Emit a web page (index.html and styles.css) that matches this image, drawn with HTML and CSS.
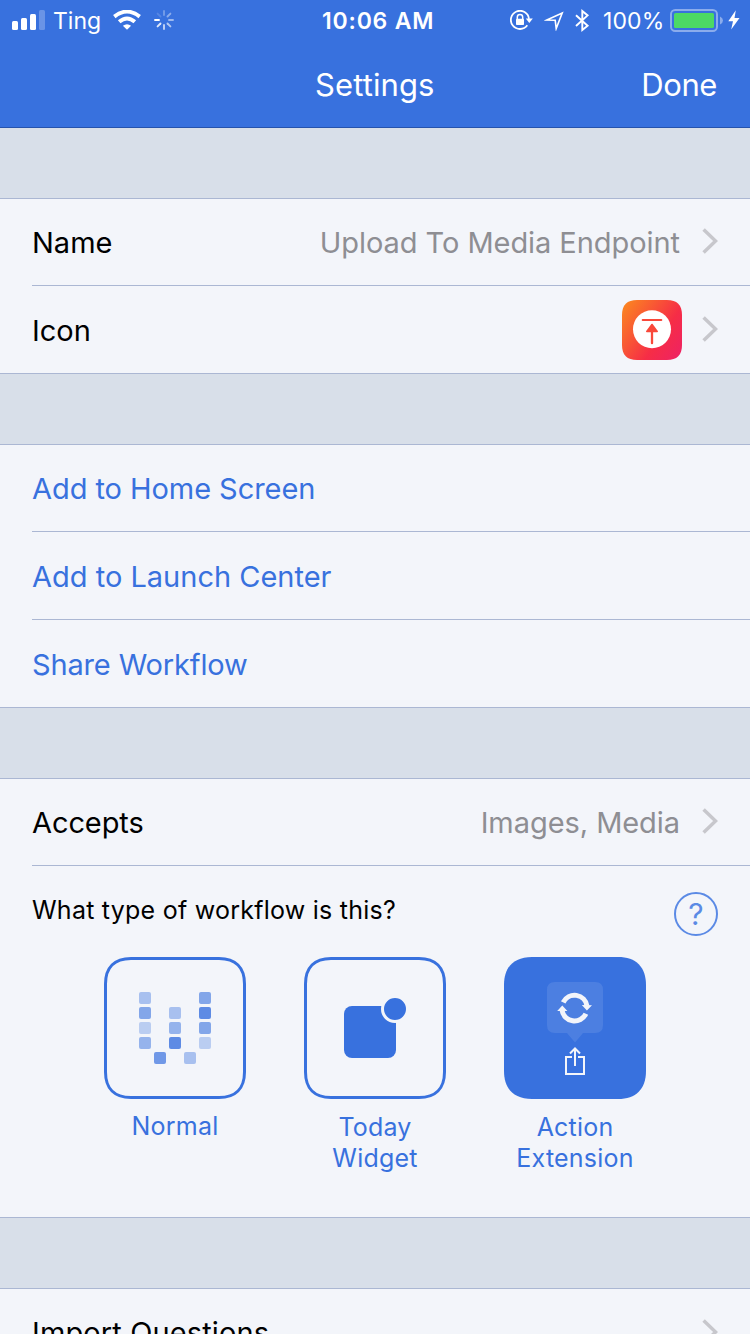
FILE: index.html
```html
<!DOCTYPE html>
<html lang="en">
<head>
<meta charset="utf-8">
<title>Settings</title>
<link rel="stylesheet" href="styles.css">
</head>
<body>
<svg class="defs" width="0" height="0" aria-hidden="true">
  <symbol id="chevron" viewBox="0 0 16 26"><path d="M1.6 1.4 L13.6 13 L1.6 24.6" fill="none" stroke="#c7c7cc" stroke-width="3.5"/></symbol>
</svg>
<header class="header">
  <div class="status">
    <div class="status-left">
      <svg class="signal" width="33" height="20" viewBox="0 0 33 20" fill="#fff"><rect y="11" width="6" height="9" rx="1.5"/><rect x="9" y="8" width="6" height="12" rx="1.5"/><rect x="18" y="4" width="6" height="16" rx="1.5"/><rect x="27" width="6" height="20" rx="1.5" opacity=".25"/></svg>
      <span class="carrier">Ting</span>
      <svg class="wifi" width="28" height="20" viewBox="0 0 28 20"><path d="M14 19.8 L9.9 15.7 Q14 12.6 18.1 15.7Z" fill="#fff"/><path d="M6.2 11.8 Q14 5.2 21.8 11.8" fill="none" stroke="#fff" stroke-width="4"/><path d="M1.3 6.6 Q14 -3.4 26.7 6.6" fill="none" stroke="#fff" stroke-width="3.9"/></svg>
      <svg class="spinner" width="20" height="20" viewBox="-10 -10 20 20" stroke="#fff" stroke-width="1.9" stroke-linecap="round"><path d="M-9 0H-5"/><path d="M-6.4 6.4L-3.5 3.5" opacity=".85"/><path d="M0 9V5" opacity=".7"/><path d="M6.4 6.4L3.5 3.5" opacity=".62"/><path d="M9 0H5" opacity=".5"/><path d="M6.4 -6.4L3.5 -3.5" opacity=".42"/><path d="M0 -9V-5" opacity=".3"/><path d="M-6.4 -6.4L-3.5 -3.5" opacity=".15"/></svg>
    </div>
    <span class="time">10:06 AM</span>
    <div class="status-right">
      <svg class="lock" width="23" height="20" viewBox="0 0 23 20" fill="none" stroke="#fff"><path d="M17.300 15.300A9.100 9.100 0 1 1 19 8.800" stroke-width="1.800"/><path d="M15.800 8.500H22.800L19.300 13Z" fill="#fff" stroke="none"/><path d="M7.300 9V7.200a2.700 2.700 0 0 1 5.400 0V9" stroke-width="1.500"/><rect x="6" y="8.700" width="8" height="6.300" rx=".8" fill="#fff" stroke="none"/></svg>
      <svg class="location" width="20" height="20" viewBox="0 0 20 20"><path d="M2.800 9L18.200 2L12.200 17.500L11.200 9.200Z" fill="none" stroke="#fff" stroke-width="1.600" stroke-miterlimit="10"/></svg>
      <svg class="bluetooth" width="15" height="23" viewBox="0 0 15 23"><path d="M1 6.200L12.600 16.800L7.300 21V2L12.600 6.400L1 17" fill="none" stroke="#fff" stroke-width="1.900"/></svg>
      <span class="percent">100%</span>
      <svg class="battery" width="54" height="24" viewBox="0 0 54 24"><rect x="1" y="1" width="46" height="21" rx="4.2" fill="none" stroke="#fff" stroke-opacity=".42" stroke-width="2"/><rect x="4" y="4" width="40" height="15" rx="1.6" fill="#4cd964"/><path d="M50 7.5 Q53 8.8 53 11.5 T50 15.5Z" fill="#fff" opacity=".42"/></svg>
      <svg class="bolt" width="12" height="20" viewBox="0 0 12 20"><path d="M7.8 .2 L.3 11.2 H5 L3.2 19.6 L11.5 7.9 H6.5Z" fill="#fff"/></svg>
    </div>
  </div>
  <nav class="nav"><h1 class="title">Settings</h1><a class="done">Done</a></nav>
</header>
<main>
  <section class="group">
    <div class="row"><span class="label name">Name</span><span class="value endpoint">Upload To Media Endpoint</span><svg class="chevron"><use href="#chevron"/></svg></div>
    <div class="row"><span class="label icon-label">Icon</span>
      <svg class="app-icon" width="60" height="60" viewBox="0 0 60 60"><defs><linearGradient id="warm" x1="0" y1=".15" x2="1" y2=".85"><stop offset="0" stop-color="#fb8222"/><stop offset=".65" stop-color="#f62d46"/><stop offset="1" stop-color="#ef2360"/></linearGradient></defs><path d="M0 15C0 5 5 0 15 0H45C55 0 60 5 60 15V45C60 55 55 60 45 60H15C5 60 0 55 0 45Z" fill="url(#warm)"/><circle cx="30" cy="29.300" r="19" fill="#fff"/><path d="M20.700 20H39.300" stroke="#f9483a" stroke-width="2" stroke-linecap="round"/><path d="M30 43.200V29" stroke="#f9483a" stroke-width="2.300" stroke-linecap="round"/><path d="M30 24.500L35.200 31.400H24.800Z" fill="#f9483a" stroke="#f9483a" stroke-width="1.600" stroke-linejoin="round"/></svg>
      <svg class="chevron"><use href="#chevron"/></svg></div>
  </section>
  <section class="group">
    <div class="row"><a class="link home">Add to Home Screen</a></div>
    <div class="row"><a class="link launch">Add to Launch Center</a></div>
    <div class="row"><a class="link share">Share Workflow</a></div>
  </section>
  <section class="group">
    <div class="row"><span class="label accepts">Accepts</span><span class="value media">Images, Media</span><svg class="chevron"><use href="#chevron"/></svg></div>
    <div class="types">
      <div class="types-head"><span class="question">What type of workflow is this?</span><span class="help">?</span></div>
      <div class="tiles">
        <div class="tile">
          <svg width="142" height="142" viewBox="0 0 142 142"><path d="M1.500 27C1.500 10.500 10.500 1.500 27 1.500H115C131.500 1.500 140.500 10.500 140.500 27V115C140.500 131.500 131.500 140.500 115 140.500H27C10.500 140.500 1.500 131.500 1.500 115Z" fill="none" stroke="#3871de" stroke-width="3"/>
          <g fill="#3871de"><rect x="35" y="35" width="12" height="12" rx="2" opacity=".4"/><rect x="35" y="50" width="12" height="12" rx="2" opacity=".6"/><rect x="35" y="65" width="12" height="12" rx="2" opacity=".3"/><rect x="35" y="80" width="12" height="12" rx="2" opacity=".5"/><rect x="50" y="95" width="12" height="12" rx="2" opacity=".7"/><rect x="65" y="50" width="12" height="12" rx="2" opacity=".4"/><rect x="65" y="65" width="12" height="12" rx="2" opacity=".5"/><rect x="65" y="80" width="12" height="12" rx="2" opacity=".8"/><rect x="80" y="95" width="12" height="12" rx="2" opacity=".4"/><rect x="95" y="35" width="12" height="12" rx="2" opacity=".6"/><rect x="95" y="50" width="12" height="12" rx="2" opacity=".8"/><rect x="95" y="65" width="12" height="12" rx="2" opacity=".6"/><rect x="95" y="80" width="12" height="12" rx="2" opacity=".3"/></g></svg>
          <span class="caption normal">Normal</span>
        </div>
        <div class="tile">
          <svg width="142" height="142" viewBox="0 0 142 142"><path d="M1.500 27C1.500 10.500 10.500 1.500 27 1.500H115C131.500 1.500 140.500 10.500 140.500 27V115C140.500 131.500 131.500 140.500 115 140.500H27C10.500 140.500 1.500 131.500 1.500 115Z" fill="none" stroke="#3871de" stroke-width="3"/><rect x="40" y="49" width="52" height="52" rx="8" fill="#3871de"/><circle cx="91" cy="52" r="12.500" fill="#3871de" stroke="#f3f5fa" stroke-width="3"/></svg>
          <span class="caption today">Today<br>Widget</span>
        </div>
        <div class="tile">
          <svg width="142" height="142" viewBox="0 0 142 142"><path d="M0 28C0 10 10 0 28 0H114C132 0 142 10 142 28V114C142 132 132 142 114 142H28C10 142 0 132 0 114Z" fill="#3871de"/><path d="M51 25H91Q99 25 99 33V68Q99 76 91 76H79L71 85.500L63 76H51Q43 76 43 68V33Q43 25 51 25Z" fill="#fff" opacity=".1"/>
          <g fill="none" stroke="#f3f5fa" stroke-width="5"><path d="M59.200 45.300A12.600 12.600 0 0 1 83 49"/><path d="M81.900 56.700A12.600 12.600 0 0 1 58 53"/></g><path d="M77.800 48L88 48.300L82.900 53.500ZM53.200 54L58.300 48.500L63.400 54Z" fill="#f3f5fa"/>
          <path d="M68 100H62V117H80V100H74M71 109V92.500M66 96.500L71 91.500L76 96.500" fill="none" stroke="#f3f5fa" stroke-width="2"/></svg>
          <span class="caption action">Action<br>Extension</span>
        </div>
      </div>
    </div>
  </section>
  <section class="group">
    <div class="row"><span class="label import">Import Questions</span><svg class="chevron"><use href="#chevron"/></svg></div>
  </section>
</main>
</body>
</html>
```
FILE: styles.css
```css
* { box-sizing: border-box; }
html, body { margin: 0; height: 1334px; overflow: hidden; }
body { width: 750px; background: #d8dfe9; font-family: Inter, "Liberation Sans", sans-serif; color: #000; }
svg { display: block; flex: none; }
.defs { position: absolute; }

.header { height: 128px; background: #3871de; color: #fff; border-bottom: 1px solid #2653ac; }
.status { height: 40px; display: grid; grid-template: 40px / 322px 1fr 240px; font-size: 23px; line-height: 38px; white-space: nowrap; }
.status-left, .status-right { display: flex; align-items: center; }
.status-left { padding-left: 12px; }
.carrier { width: 47px; margin-left: 8px; padding-top: 2px; }
.wifi { margin-left: 13px; }
.spinner { margin-left: 13px; }
.time { padding-top: 2px; font-weight: 600; letter-spacing: .8px; }
.location { margin-left: 11px; margin-top: 2px; }
.bluetooth { margin-left: 11px; }
.percent { width: 61px; margin-left: 13px; padding-top: 2px; letter-spacing: .1px; }
.battery { margin-left: 6px; margin-top: 1px; }
.bolt { margin-left: 4px; }
.nav { height: 87px; display: grid; grid-template-columns: 1fr 120px 1fr; align-items: center; padding: 1px 33px 0; font-size: 31px; }
.title { grid-column: 2; margin: 0; font-size: 31px; font-weight: 400; letter-spacing: .1px; white-space: nowrap; }
.done { justify-self: end; letter-spacing: -.4px; }

.group { margin-top: 70px; background: #f3f5fa; border: solid #abb7d3; border-width: 1px 0; }
.row { height: 88px; margin-left: 32px; padding-right: 32px; display: flex; align-items: center; border-bottom: 1px solid #abb7d3; font-size: 29px; white-space: nowrap; }
.row:first-child { height: 87px; }
.row:last-child { height: 87px; border-bottom: 0; }
.row:not(:first-child) .label, .row:not(:first-child) .link { padding-top: 2px; }
.label { margin-right: auto; }
.value { color: #8e8e93; letter-spacing: -.06px; }
.chevron { width: 16px; height: 26px; margin: 0 0 2px 22px; }
.app-icon + .chevron { margin: 0 0 1px 20px; }
.link, .caption { color: #3871de; }
.home { letter-spacing: -.06px; }
.share { letter-spacing: -.15px; }
.accepts { letter-spacing: -.1px; }
.import { letter-spacing: .12px; }

.types { height: 351px; padding: 26px 32px 0; }
.types-head { display: flex; justify-content: space-between; height: 65px; font-size: 25px; }
.question { line-height: 37px; letter-spacing: .24px; }
.help { width: 44px; height: 44px; border: 2px solid #5b8ae5; border-radius: 50%; color: #5b8ae5; font-size: 30px; line-height: 40px; text-align: center; }
.tiles { display: grid; grid-template-columns: repeat(3, 142px); column-gap: 58px; padding-left: 72px; }
.tile { display: flex; flex-direction: column; align-items: center; }
.caption { margin-top: 13px; font-size: 25px; line-height: 31px; letter-spacing: .2px; text-align: center; }
.normal { margin-top: 12px; }
```
